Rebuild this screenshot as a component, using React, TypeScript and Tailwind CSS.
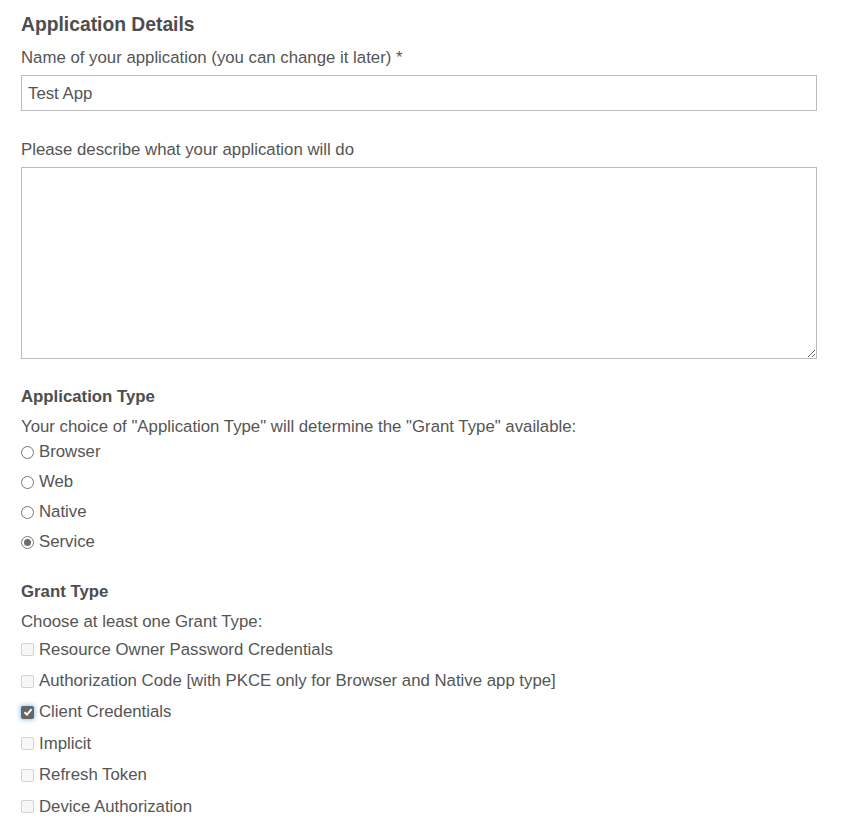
import { useState } from "react";

const APP_TYPES = ["Browser", "Web", "Native", "Service"];

const GRANT_TYPES = [
  "Resource Owner Password Credentials",
  "Authorization Code [with PKCE only for Browser and Native app type]",
  "Client Credentials",
  "Implicit",
  "Refresh Token",
  "Device Authorization",
];

function Radio({ checked }: { checked: boolean }) {
  return (
    <span className="w-[13px] h-[13px] rounded-full border border-[#767676] bg-white flex items-center justify-center flex-shrink-0">
      {checked && <span className="w-[7px] h-[7px] rounded-full bg-[#6b6b6b]" />}
    </span>
  );
}

function Checkbox({ checked }: { checked: boolean }) {
  if (checked) {
    return (
      <span className="w-[13px] h-[13px] rounded-[2px] bg-[#666] flex items-center justify-center flex-shrink-0 shadow-[0_0_4px_1px_rgba(102,175,233,0.7)]">
        <svg width="10" height="10" viewBox="0 0 10 10">
          <path d="M1.5 5.2 L4 7.6 L8.6 2.2" fill="none" stroke="#fff" strokeWidth="2" />
        </svg>
      </span>
    );
  }
  return (
    <span className="w-[13px] h-[13px] rounded-[2px] border border-[#d4d4d4] bg-[#f7f7f7] flex-shrink-0" />
  );
}

export default function App() {
  const [name, setName] = useState("Test App");
  const [desc, setDesc] = useState("");
  const [appType, setAppType] = useState("Service");
  const [grants, setGrants] = useState<string[]>(["Client Credentials"]);

  const toggleGrant = (g: string) =>
    setGrants((prev) => (prev.includes(g) ? prev.filter((x) => x !== g) : [...prev, g]));

  return (
    <div className="min-h-screen bg-white text-[#555] font-['Liberation_Sans',Arial,sans-serif] text-[16.8px] px-[21px] pt-[13px] w-[838px]">
      {/* Application details */}
      <h2 className="text-[19.3px] leading-[24px] font-bold text-[#4d4d4d]">Application Details</h2>

      <label className="block mt-[11px] leading-[20px]">
        Name of your application (you can change it later) *
      </label>
      <input
        value={name}
        onChange={(e) => setName(e.target.value)}
        className="mt-[7px] block w-full h-[36px] border border-[#bbb] px-[6px] pt-[2px] text-[16.8px] text-[#555] outline-none"
      />

      <label className="block mt-[29px] leading-[20px]">Please describe what your application will do</label>
      <textarea
        value={desc}
        onChange={(e) => setDesc(e.target.value)}
        className="mt-[7px] block w-full h-[192px] border border-[#bbb] px-[6px] py-[4px] outline-none"
      />

      {/* Application type */}
      <h3 className="mt-[28px] font-bold leading-[20px] text-[#4d4d4d]">Application Type</h3>
      <p className="mt-[10px] leading-[20px]">
        Your choice of "Application Type" will determine the "Grant Type" available:
      </p>
      <div className="flex flex-col">
        {APP_TYPES.map((t) => (
          <label
            key={t}
            onClick={() => setAppType(t)}
            className="h-[30px] flex items-center gap-[5px] cursor-pointer"
          >
            <Radio checked={appType === t} />
            <span className="leading-[20px]">{t}</span>
          </label>
        ))}
      </div>

      {/* Grant type */}
      <h3 className="mt-[25px] font-bold leading-[20px] text-[#4d4d4d]">Grant Type</h3>
      <p className="mt-[10px] leading-[20px]">Choose at least one Grant Type:</p>
      <div className="flex flex-col mt-[2px]">
        {GRANT_TYPES.map((g) => (
          <label
            key={g}
            onClick={() => toggleGrant(g)}
            className="h-[31.4px] flex items-center gap-[5px] cursor-pointer"
          >
            <Checkbox checked={grants.includes(g)} />
            <span className="leading-[20px]">{g}</span>
          </label>
        ))}
      </div>
    </div>
  );
}
